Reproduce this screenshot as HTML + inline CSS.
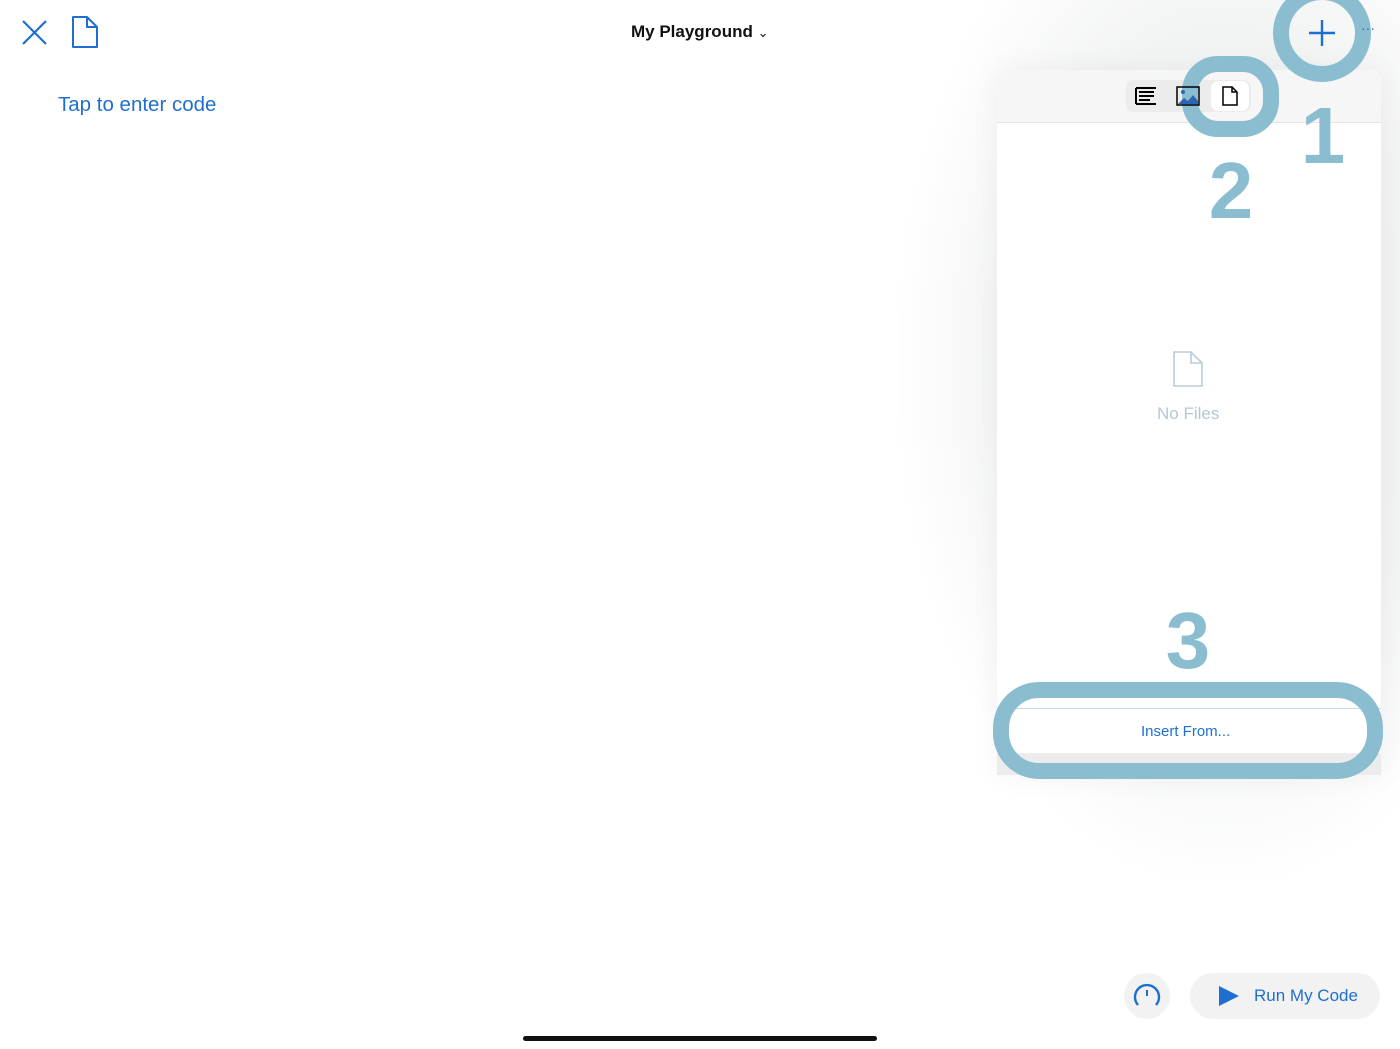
<!DOCTYPE html>
<html><head><style>
body{margin:0;width:1400px;height:1049px;background:#fff;position:relative;overflow:hidden;font-family:"Liberation Sans",sans-serif}
.a{position:absolute}
.hl{position:absolute;border:16px solid #8bbdd0;box-sizing:border-box}
.num{position:absolute;color:#8bbdd0;font-size:80px;font-weight:bold;line-height:1;font-family:"Liberation Sans",sans-serif;transform:translateX(-50%)}
</style></head><body>
<div class="a" style="left:900px;top:-60px;width:540px;height:940px;background:radial-gradient(ellipse at 60% 45%,#edeeee 0%,#f2f3f3 45%,rgba(255,255,255,0) 72%)"></div>
<svg class="a" style="left:20px;top:18px" width="30" height="30"><path d="M3 3L26 26M26 3L3 26" stroke="#1f6fd0" stroke-width="2.2"/></svg>
<svg class="a" style="left:70px;top:15px" width="30" height="34"><path d="M3 2H17L27 12V32H3Z M17 2V12H27" fill="none" stroke="#1f6fd0" stroke-width="2" stroke-linejoin="round"/></svg>
<div class="a" style="left:631px;top:22px;font-size:17px;font-weight:bold;color:#111">My Playground <span style="font-weight:normal;font-size:13px">&#8964;</span></div>
<div class="a" style="left:58px;top:93px;font-size:20.5px;color:#1f6fd0">Tap to enter code</div>
<div class="a" style="left:997px;top:70px;width:384px;height:705px;background:#fff;border-radius:10px 10px 0 0;box-shadow:0 0 30px rgba(0,0,0,.05)"></div>
<div class="a" style="left:997px;top:70px;width:384px;height:52px;background:#f6f6f6;border-radius:10px 10px 0 0;border-bottom:1px solid #e4e4e4"></div>
<div class="a" style="left:1126px;top:80px;width:125px;height:32px;background:#ececec;border-radius:8px"></div>
<div class="a" style="left:1211px;top:81px;width:38px;height:30px;background:#fff;border-radius:7px"></div>
<div class="a" style="left:997px;top:708px;width:384px;height:1px;background:#c7d7e3"></div>
<div class="a" style="left:997px;top:753px;width:384px;height:22px;background:#ececec"></div>
<div class="a" style="left:1141px;top:723px;font-size:15px;color:#1f6fd0">Insert From...</div>
<div class="hl" style="left:1273px;top:-16px;width:98px;height:98px;border-radius:50%"></div>
<div class="hl" style="left:1182px;top:56px;width:97px;height:81px;border-radius:36px"></div>
<div class="hl" style="left:993px;top:682px;width:390px;height:97px;border-radius:46px"></div>
<svg class="a" style="left:1134px;top:86px" width="24" height="20"><path d="M2 2H22M5 6H20M5 10H20M5 14H16M2 18H22" stroke="#000" stroke-width="2"/><path d="M2 2V18" stroke="#000" stroke-width="2"/></svg>
<svg class="a" style="left:1176px;top:86px" width="24" height="20"><rect x="1" y="1" width="22" height="18" fill="none" stroke="#000" stroke-width="1.5"/><path d="M2 18L8 12L12 15L17 9L22 15V18Z" fill="#2b66b5"/><circle cx="7" cy="6" r="2" fill="#2b66b5"/></svg>
<svg class="a" style="left:1221px;top:86px" width="18" height="20"><path d="M2 1H11L16 6V19H2Z M11 1V6H16" fill="none" stroke="#000" stroke-width="1.5"/></svg>
<svg class="a" style="left:1306px;top:17px" width="32" height="32"><path d="M16 3V29M3 16H29" stroke="#1f6fd0" stroke-width="2.4"/></svg>
<div class="a" style="left:1361px;top:20px;color:#1f6fd0;font-size:14px">···</div>
<svg class="a" style="left:1172px;top:351px" width="32" height="36"><path d="M2 1H19L30 12V35H2Z M19 1V12H30" fill="none" stroke="#b8cdd6" stroke-width="1.6"/></svg>
<div class="a" style="left:1157px;top:404px;font-size:17px;color:#b3c8d3">No Files</div>
<div class="num" style="left:1323px;top:96px">1</div>
<div class="num" style="left:1231px;top:151px">2</div>
<div class="num" style="left:1188px;top:601px">3</div>
<div class="a" style="left:1124px;top:973px;width:46px;height:46px;border-radius:50%;background:#f2f2f2"></div>
<svg class="a" style="left:1131px;top:980px" width="32" height="32"><path d="M7 25A12 12 0 1 1 25 25" fill="none" stroke="#1f6fd0" stroke-width="2.4"/><path d="M16 10V16" stroke="#1f6fd0" stroke-width="2"/></svg>
<div class="a" style="left:1190px;top:973px;width:190px;height:46px;border-radius:23px;background:#f2f2f2"></div>
<svg class="a" style="left:1218px;top:985px" width="22" height="22"><path d="M1 1L21 11L1 21Z" fill="#1f6fd0"/></svg>
<div class="a" style="left:1254px;top:986px;font-size:17px;color:#1f6fd0">Run My Code</div>
<div class="a" style="left:523px;top:1036px;width:354px;height:5px;border-radius:3px;background:#111"></div>
</body></html>
